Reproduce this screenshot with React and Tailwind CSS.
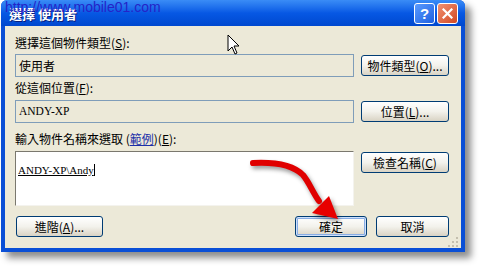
import clsx from "clsx";

// Diálogo XP "選擇 使用者" con flecha roja de anotación

const cjk = "font-['Noto_Sans_CJK_TC','Noto_Sans_CJK_SC',sans-serif]";
const serif = "font-['Liberation_Serif',serif]";

function Btn({ children, def, className = "" }) {
  return (
    <button
      className={clsx(
        "flex h-[21px] items-center justify-center rounded-[3px] border border-[#003C74] bg-gradient-to-b from-white via-[#F3F2EC] to-[#D9D3C4] text-[12px] leading-none text-black",
        def && "shadow-[inset_0_0_0_1px_#CEE0FB,inset_0_0_0_2px_#89ADE4]",
        cjk,
        className
      )}
    >
      {children}
    </button>
  );
}

function Etiqueta({ children }) {
  return <div className={clsx("h-[16px] text-[12px] leading-[16px] text-black", cjk)}>{children}</div>;
}

function Campo({ children, className = "" }) {
  return (
    <div className={clsx("flex h-[23px] items-center border border-[#7F9DB9] bg-[#ECE9D8] px-[3px] text-black", className)}>
      {children}
    </div>
  );
}

export default function App() {
  return (
    <div className="relative h-[275px] w-[485px] overflow-hidden bg-white">
      {/* Ventana */}
      <div className="ml-[1px] flex h-[252px] w-[464px] flex-col rounded-t-[6px] bg-[#0A4FD6] shadow-[6px_6px_7px_rgba(0,0,0,0.45)]">
        {/* Barra de título */}
        <div className="flex h-[30px] items-center justify-between rounded-t-[6px] bg-gradient-to-b from-[#3A8CF6] via-[#0758E4] to-[#0048CF] pl-[8px] pr-[7px]">
          <span className={clsx("pt-[1px] text-[13px] font-bold text-white [text-shadow:1px_1px_0_#0A1E7C]", cjk)}>選擇 使用者</span>
          <div className="flex gap-[2px]">
            <div className="flex h-[21px] w-[21px] items-center justify-center rounded-[3px] border border-white bg-gradient-to-br from-[#5A9BFF] to-[#1E5FE0] text-[15px] font-bold leading-none text-white font-['Liberation_Sans',sans-serif]">
              ?
            </div>
            <div className="flex h-[21px] w-[21px] items-center justify-center rounded-[3px] border border-white bg-gradient-to-br from-[#F09070] to-[#D2461E]">
              <svg width="11" height="11" viewBox="0 0 11 11">
                <path d="M1.5 1.5 L9.5 9.5 M9.5 1.5 L1.5 9.5" stroke="white" strokeWidth="2.2" strokeLinecap="square" />
              </svg>
            </div>
          </div>
        </div>

        {/* Cuerpo */}
        <div className="mx-[4px] mb-[4px] flex flex-1 flex-col bg-[#ECE9D8] pl-[10px] pr-[12px] pt-[9px]">
          <Etiqueta>
            選擇這個物件類型(<span className="underline">S</span>):
          </Etiqueta>
          <div className="mt-[3px] flex items-center gap-[7px]">
            <Campo className={clsx("flex-1 text-[12px]", cjk)}>使用者</Campo>
            <Btn className="w-[88px]">
              物件類型(<span className="underline">O</span>)...
            </Btn>
          </div>

          <div className="mt-[3px]">
            <Etiqueta>
              從這個位置(<span className="underline">F</span>):
            </Etiqueta>
          </div>
          <div className="mt-[4px] flex items-center gap-[7px]">
            <Campo className={clsx("flex-1 text-[11.5px]", serif)}>ANDY-XP</Campo>
            <Btn className="w-[88px]">
              位置(<span className="underline">L</span>)...
            </Btn>
          </div>

          <div className="mt-[8px]">
            <Etiqueta>
              輸入物件名稱來選取 (<span className="text-[#1C2FA8] underline">範例</span>)(<span className="underline">E</span>):
            </Etiqueta>
          </div>
          <div className="mt-[4px] flex items-start gap-[7px]">
            <div className="h-[55px] flex-1 border border-b-[#F4F3EE] border-l-[#7A786E] border-r-[#F4F3EE] border-t-[#7A786E] bg-white px-[2px] pt-[4px]">
              <span className={clsx("border-r border-black text-[11px] leading-[14px] text-black underline", serif)}>ANDY-XP\Andy</span>
            </div>
            <Btn className="mt-[1px] w-[88px]">
              檢查名稱(<span className="underline">C</span>)
            </Btn>
          </div>

          <div className="mt-[10px] flex items-center">
            <Btn className="ml-[1px] w-[87px]">
              進階(<span className="underline">A</span>)...
            </Btn>
            <div className="flex-1" />
            <Btn def className="w-[72px]">
              確定
            </Btn>
            <Btn className="ml-[9px] w-[73px]">取消</Btn>
          </div>

          {/* Agarre de tamaño */}
          <div className="mt-auto flex justify-end pb-[1px]">
            <svg width="10" height="10" viewBox="0 0 10 10" className="-mr-[9px]">
              {[[8, 0], [8, 4], [4, 4], [8, 8], [4, 8], [0, 8]].map(([x, y], i) => (
                <rect key={i} x={x} y={y} width="2" height="2" fill="#C4BFAE" />
              ))}
            </svg>
          </div>
        </div>
      </div>

      {/* Marca de agua */}
      <div className="absolute left-[5px] top-[-3px] text-[14px] text-[#2424C8] font-['Liberation_Sans',sans-serif]">
        http://www.mobile01.com
      </div>

      {/* Cursor */}
      <svg className="absolute left-[227px] top-[34px]" width="14" height="22" viewBox="0 0 14 22">
        <path d="M1 1 L1 17 L5 13 L8 20 L10 19 L7 12 L12 12 Z" fill="white" stroke="black" strokeWidth="1" strokeLinejoin="miter" />
      </svg>

      {/* Flecha roja */}
      <svg className="absolute left-[245px] top-[155px] [filter:drop-shadow(2px_3px_2px_rgba(0,0,0,0.4))]" width="100" height="70" viewBox="0 0 100 70">
        <path d="M8 8 C 28 7, 48 10, 58 20 C 64 27, 68 38, 74 46" fill="none" stroke="#E00000" strokeWidth="6" strokeLinecap="round" />
        <path d="M67 58 L84 41 L93 64 Z" fill="#E80000" />
      </svg>
    </div>
  );
}
